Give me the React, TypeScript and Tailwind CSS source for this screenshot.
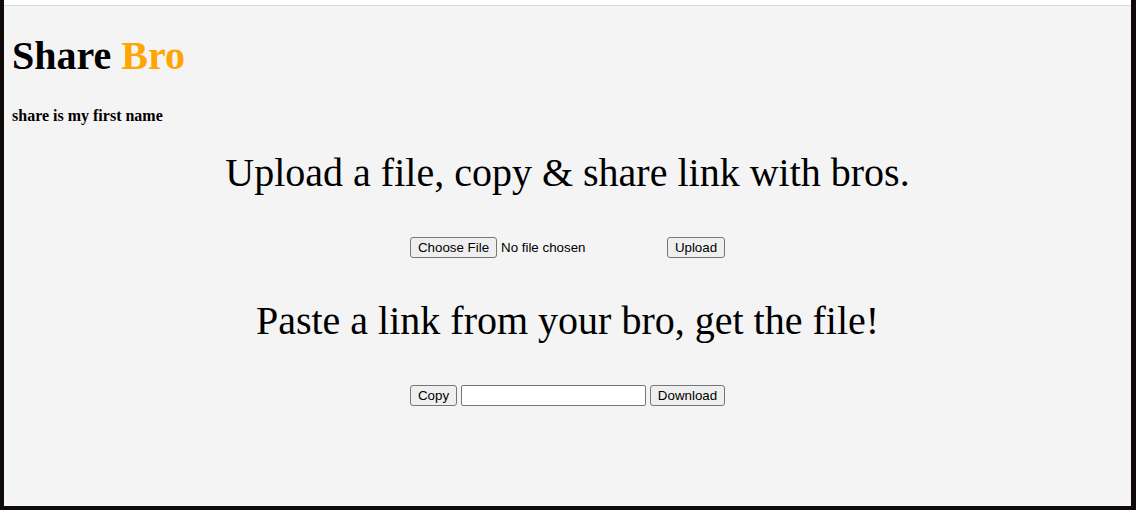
export default function App() {
    const btn =
        'h-[21px] bg-[#efefef] border border-[#767676] rounded-[3px] text-[13.33px] leading-[15px] text-black font-["Liberation_Sans",Arial,sans-serif] flex items-center justify-center'

    return (
        <div className="w-[1136px] h-[510px] bg-[#0f0a09] pl-[4px] pr-[5px] pb-[4px]">
            <div className="h-full bg-[#f4f4f4] font-['Liberation_Serif','Times_New_Roman',serif] text-black">
                <div className="h-[6px] bg-white border-b border-[#dadada]" />

                <div className="px-[8px]">
                    <h1 className="mt-[27px] text-[40px] leading-[46px] font-bold">
                        Share <span className="text-[#ffa500]">Bro</span>
                    </h1>
                    <h3 className="mt-[28px] text-[16px] leading-[18px] font-bold">share is my first name</h3>
                </div>

                <h2 className="mt-[25px] text-center text-[40px] leading-[46px]">
                    Upload a file, copy &amp; share link with bros.
                </h2>
                <div className="mt-[41px] flex justify-center gap-[4px]">
                    <div className="w-[253px] flex items-center gap-[4px]">
                        <button className={`${btn} w-[87px]`}>Choose File</button>
                        <span className='text-[13.33px] font-["Liberation_Sans",Arial,sans-serif]'>No file chosen</span>
                    </div>
                    <button className={`${btn} w-[58px]`}>Upload</button>
                </div>

                <h2 className="mt-[40px] text-center text-[40px] leading-[46px]">
                    Paste a link from your bro, get the file!
                </h2>
                <div className="mt-[41px] flex justify-center gap-[4px]">
                    <button className={`${btn} w-[47px]`}>Copy</button>
                    <input
                        type="text"
                        className="w-[185px] h-[21px] bg-white border border-[#767676] rounded-[2px]"
                    />
                    <button className={`${btn} w-[75px]`}>Download</button>
                </div>
            </div>
        </div>
    )
}
